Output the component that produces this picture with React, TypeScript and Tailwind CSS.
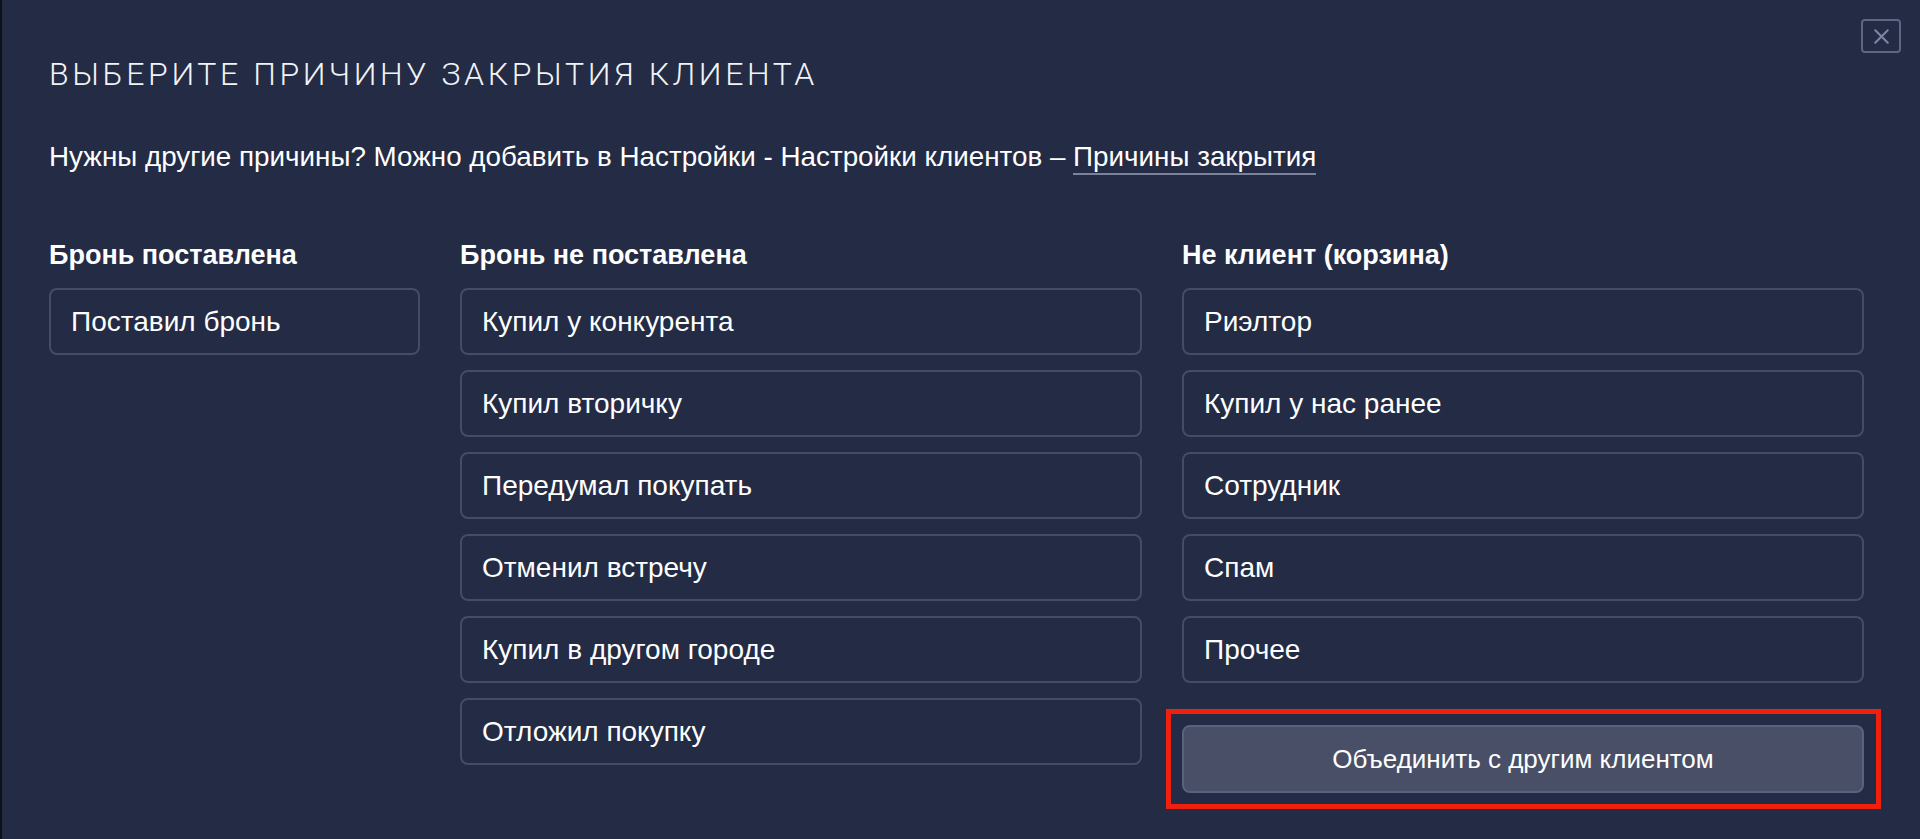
import { X } from 'lucide-react'

const KOLONKI: { title: string; items: string[] }[] = [
  { title: 'Бронь поставлена', items: ['Поставил бронь'] },
  {
    title: 'Бронь не поставлена',
    items: [
      'Купил у конкурента',
      'Купил вторичку',
      'Передумал покупать',
      'Отменил встречу',
      'Купил в другом городе',
      'Отложил покупку',
    ],
  },
  {
    title: 'Не клиент (корзина)',
    items: ['Риэлтор', 'Купил у нас ранее', 'Сотрудник', 'Спам', 'Прочее'],
  },
]

function ReasonButton({ label }: { label: string }) {
  return (
    <button
      type="button"
      className="flex h-[67px] w-full items-center rounded-lg border-2 border-[#434c69] bg-[#232b45] pl-[20px] text-left text-[28px] text-white"
    >
      {label}
    </button>
  )
}

export default function App() {
  return (
    <div
      className="relative h-[839px] w-full overflow-hidden border-l-2 border-[#0e111a] bg-[#232b45] pl-[47px] pr-[55px] text-white"
      style={{ fontFamily: '"Liberation Sans", Arial, sans-serif' }}
    >
      <button
        type="button"
        aria-label="Закрыть"
        className="absolute right-[19px] top-[19px] flex h-[34px] w-[40px] items-center justify-center rounded-[4px] border-2 border-[#5d6785] text-[#7c86a3]"
      >
        <X size={25} strokeWidth={2} />
      </button>

      <h1
        className="pt-[54px] text-[32px] font-light uppercase leading-[40px] tracking-[0.113em] text-[#f2f3f6]"
        style={{ fontFamily: 'Roboto, "Liberation Sans", sans-serif' }}
      >
        Выберите причину закрытия клиента
      </h1>

      <p className="mt-[47px] text-[27.8px] leading-[32px]">
        Нужны другие причины? Можно добавить в Настройки - Настройки клиентов –{' '}
        <a href="#" className="border-b-2 border-[#7a8299] pb-[1px]">
          Причины закрытия
        </a>
      </p>

      <div className="mt-[67px] grid grid-cols-[371px_682px_682px] gap-x-[40px]">
        {KOLONKI.map((col, i) => (
          <div key={col.title} className="flex flex-col">
            <h2 className="mb-[18px] text-[27px] font-bold leading-[30px]">{col.title}</h2>
            <div className="flex flex-col gap-[15px]">
              {col.items.map((it) => (
                <ReasonButton key={it} label={it} />
              ))}
              {i === 2 && (
                <div className="-ml-[16px] -mr-[17px] mt-[11px] border-[5px] border-[#f0200e] pl-[11px] pr-[12px] py-[11px]">
                  <button
                    type="button"
                    className="flex h-[68px] w-full items-center justify-center rounded-lg border-2 border-[#5a6280] bg-[#484f66] text-[26px] text-white"
                  >
                    Объединить с другим клиентом
                  </button>
                </div>
              )}
            </div>
          </div>
        ))}
      </div>
    </div>
  )
}
